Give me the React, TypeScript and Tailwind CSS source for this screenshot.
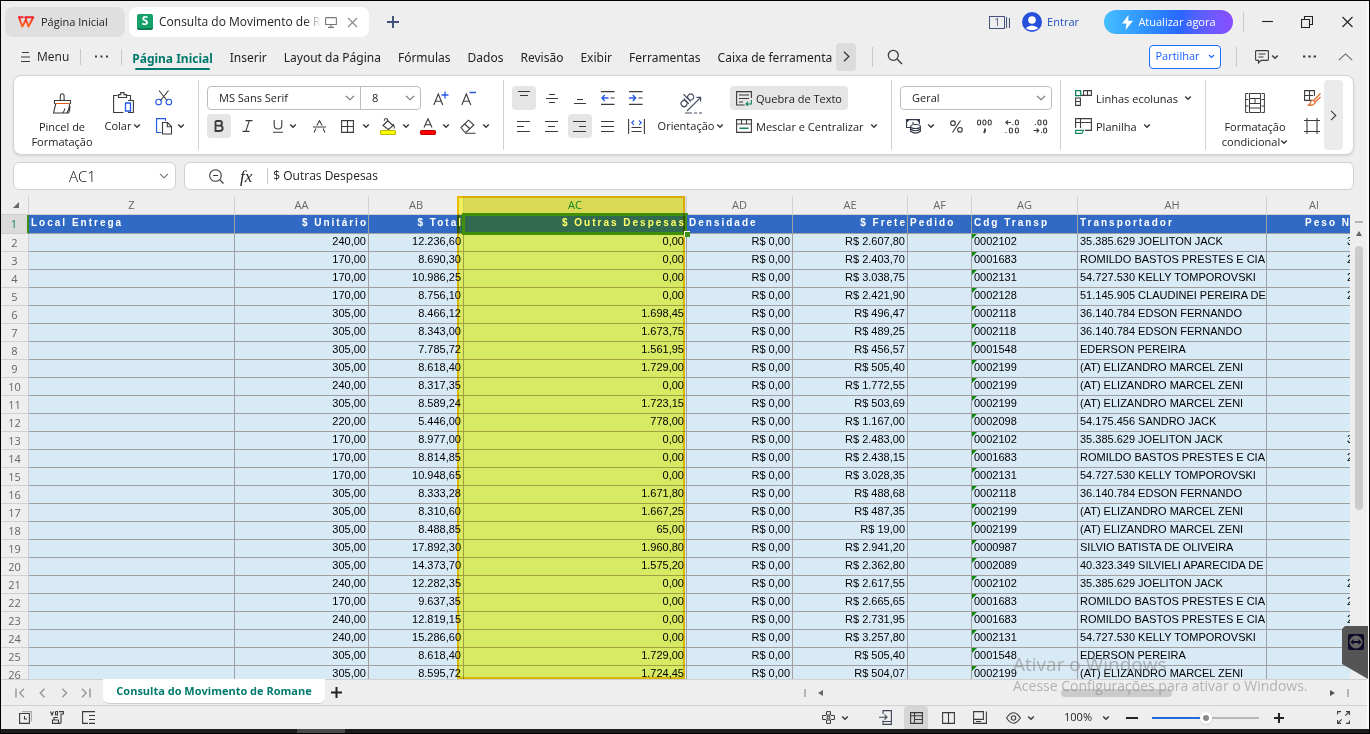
import React from "react";

type Kids = { children?: React.ReactNode };

function Ic({ w = 20, h = 20, className = "", children }: Kids & { w?: number; h?: number; className?: string }) {
  return (
    <svg width={w} height={h} viewBox={`0 0 ${w} ${h}`} fill="none" stroke="#3b3b3b" strokeWidth="1.1" className={`shrink-0 ${className}`} aria-hidden="true">
      {children}
    </svg>
  );
}

const Chev = () => (
  <Ic w={8} h={6}>
    <path d="M1.2 1.5L4 4.2L6.8 1.5" strokeWidth="1.5" />
  </Ic>
);

const WideChev = ({ className = "" }: { className?: string }) => (
  <Ic w={10} h={6} className={`pointer-events-none ${className}`}>
    <path d="M1 .8L5 4.8L9 .8" stroke="#6b6b6b" />
  </Ic>
);

const Sep = ({ className = "" }: { className?: string }) => <span className={`w-px shrink-0 bg-[#c9c9c9] ${className}`} />;

function Tool({ label, active = false, className = "w-6", children }: Kids & { label: string; active?: boolean; className?: string }) {
  return (
    <button
      type="button"
      aria-label={label}
      className={`flex h-6 shrink-0 items-center justify-center rounded ${active ? "bg-[#e5e5e5]" : ""} ${className}`}
    >
      {children}
    </button>
  );
}

function Group({ className, last = false, children }: Kids & { className: string; last?: boolean }) {
  return (
    <div className={`my-1 flex shrink-0 pt-1.5 ${last ? "" : "border-r border-[#d2d2d2]"} ${className}`}>{children}</div>
  );
}

const LINES = {
  top: "M6 1.5H18M8 5.5H16",
  middle: "M9 4.5H15M6 8.5H18M9 12.5H15",
  bottom: "M9 9.5H15M6 13.5H18",
  left: "M5 3.5H18M5 8.5H12M5 13.5H18",
  center: "M5 3.5H18M8 8.5H15M5 13.5H18",
  right: "M5 3.5H18M11 8.5H18M5 13.5H18",
  justify: "M5 3.5H18M5 8.5H18M5 13.5H18",
};

const Lines = ({ d }: { d: string }) => (
  <Ic w={24} h={17}>
    <path d={d} />
  </Ic>
);

function TitleBar() {
  return (
    <header className="flex h-10 shrink-0 items-center pl-1 text-[11px]">
      <button type="button" className="flex h-[30px] w-[120px] shrink-0 items-center gap-1.5 rounded-lg bg-[#dfdfdf] pl-3">
        <svg width="18" height="12" viewBox="0 0 18 12" aria-hidden="true">
          <defs>
            <linearGradient id="wps" x1="0" y1="0" x2="0" y2="1">
              <stop offset="0" stopColor="#f5222d" />
              <stop offset="1" stopColor="#ff6a1a" />
            </linearGradient>
          </defs>
          <path d="M1 1.3H6.5M2 1.3L5.3 10.7L9 3.5L11.4 10.7L16.3 1.3H8.3L9.2 3.5" fill="none" stroke="url(#wps)" strokeWidth="1.9" strokeLinejoin="round" />
        </svg>
        Página Inicial
      </button>
      <div className="ml-1 flex h-[30px] w-60 shrink-0 items-center rounded-lg bg-white pl-2">
        <span className="flex size-4 shrink-0 items-center justify-center rounded-[2px] border-b-2 border-[#0b7a4c] bg-[#16a06a] text-[12px] leading-none font-bold text-white">S</span>
        <span className="relative ml-1.5 w-[162px] overflow-hidden text-[12px] whitespace-nowrap">
          Consulta do Movimento de Ro
          <span className="absolute inset-y-0 right-0 w-4 bg-linear-to-r from-transparent to-white" />
        </span>
        <button type="button" aria-label="Apresentar" className="ml-1">
          <Ic w={12} h={11}>
            <path d="M.6 1.5Q.6.6 1.5.6H10.5Q11.4.6 11.4 1.5V7.5H.6zM6 7.5V10M3 10.4H9" stroke="#777" />
          </Ic>
        </button>
        <button type="button" aria-label="Fechar guia" className="ml-2.5">
          <Ic w={11} h={11}>
            <path d="M1 1L10 10M10 1L1 10" stroke="#888" />
          </Ic>
        </button>
      </div>
      <button type="button" aria-label="Nova guia" className="ml-[18px]">
        <Ic w={12} h={12}>
          <path d="M6 0V12M0 6H12" stroke="#44527a" strokeWidth="2" />
        </Ic>
      </button>
      <div className="ml-auto flex items-center pr-3.5">
        <button type="button" aria-label="Janelas" className="flex items-center gap-px text-[#44527a]">
          <span className="flex h-[13px] w-4 items-center justify-center border border-[#44527a] text-[10px] leading-none">1</span>
          <Ic w={4} h={13}>
            <path d="M.5 1V12M3.5 2V12" stroke="#44527a" />
          </Ic>
        </button>
        <button type="button" className="ml-3 flex items-center gap-[5px] text-[#1f4fc0]">
          <svg width="20" height="20" viewBox="0 0 20 20" aria-hidden="true">
            <circle cx="10" cy="10" r="10" fill="#2450dc" />
            <circle cx="10" cy="8" r="3.8" fill="#fff" />
            <path d="M3.6 16.2Q10 10.6 16.4 16.2Q10 20.5 3.6 16.2" fill="#fff" />
          </svg>
          Entrar
        </button>
        <button type="button" className="ml-[25px] flex h-6 w-[129px] items-center justify-center gap-1 rounded-full bg-linear-to-r from-[#45bfff] via-[#2a66ff] via-60% to-[#8a4dff] text-white">
          <svg width="13" height="15" viewBox="0 0 13 15" aria-hidden="true">
            <path d="M7.5 0L1 8.6H5.4L4.6 15L12 5.8H7.2z" fill="#fff" />
          </svg>
          Atualizar agora
        </button>
        <Sep className="ml-[10px] h-5" />
        <button type="button" aria-label="Minimizar" className="ml-[18px]">
          <Ic w={11} h={12}>
            <path d="M0 5.5H11" stroke="#222" />
          </Ic>
        </button>
        <button type="button" aria-label="Restaurar" className="ml-[28px]">
          <Ic w={12} h={12}>
            <path d="M.5 3.5H8.5V11.5H.5zM3.5 3.5V.5H11.5V8.5H8.5" stroke="#222" />
          </Ic>
        </button>
        <button type="button" aria-label="Fechar" className="ml-[29px]">
          <Ic w={11} h={12}>
            <path d="M.5 1L10.5 11M10.5 1L.5 11" stroke="#222" />
          </Ic>
        </button>
      </div>
    </header>
  );
}

const TABS = ["Inserir", "Layout da Página", "Fórmulas", "Dados", "Revisão", "Exibir", "Ferramentas", "Caixa de ferramenta"];

function MenuBar() {
  return (
    <nav className="flex h-[33px] shrink-0 items-center pb-1 text-[12px]">
      <button type="button" className="ml-5 flex items-center gap-[7px]">
        <Ic w={9} h={12}>
          <path d="M1 1.5H8M0 6H9M0 10.5H9" />
        </Ic>
        Menu
      </button>
      <Sep className="ml-[11px] h-4" />
      <button type="button" aria-label="Mais" className="ml-[14px]">
        <Ic w={13} h={3}>
          <path d="M0 1.5H2M5.5 1.5H7.5M11 1.5H13" strokeWidth="2" />
        </Ic>
      </button>
      <Sep className="ml-[13px] h-4" />
      <div className="ml-[10px] flex items-center gap-[17px] font-['Noto_Sans',sans-serif] whitespace-nowrap">
        <button type="button" className="-mb-1 flex flex-col items-center pt-0.5 font-bold text-[#007a6c]">
          Página Inicial
          <span className="h-0.5 w-[75px] rounded bg-[#007a6c]" />
        </button>
        {TABS.map((t) => (
          <button key={t} type="button" className="pt-0.5">
            {t}
          </button>
        ))}
      </div>
      <button type="button" aria-label="Mais guias" className="ml-1 flex h-7 w-5 shrink-0 items-center justify-center rounded bg-[#dcdcdc]">
        <Ic w={7} h={11}>
          <path d="M1 .8L5.8 5.5L1 10.2" strokeWidth="1.4" />
        </Ic>
      </button>
      <Sep className="ml-4 h-5" />
      <button type="button" aria-label="Pesquisar" className="ml-[14px]">
        <Ic w={16} h={16}>
          <circle cx="6.3" cy="6.3" r="5" strokeWidth="1.3" />
          <path d="M10 10L15 15" strokeWidth="1.4" />
        </Ic>
      </button>
      <div className="ml-auto flex items-center pr-3.5">
        <button type="button" className="flex h-6 w-[72px] items-center justify-center gap-2 rounded border border-[#1a6dff] bg-white text-[11px] text-[#1a5fff]">
          Partilhar
          <svg width="7" height="5" viewBox="0 0 7 5" fill="none" stroke="#1a5fff" strokeWidth="1.1" aria-hidden="true">
            <path d="M1 1L3.5 3.5L6 1" />
          </svg>
        </button>
        <Sep className="ml-[15px] h-5" />
        <button type="button" aria-label="Comentários" className="ml-[18px] flex items-center gap-0.5">
          <Ic w={14} h={14}>
            <path d="M1.5.6H12.5Q13.4.6 13.4 1.5V9.5Q13.4 10.4 12.5 10.4H6L3.5 13V10.4H1.5Q.6 10.4.6 9.5V1.5Q.6.6 1.5.6zM3.5 4H10.5M3.5 7H8.5" />
          </Ic>
          <Chev />
        </button>
        <button type="button" aria-label="Mais opções" className="ml-[24px]">
          <Ic w={13} h={3}>
            <path d="M0 1.5H2.4M5.3 1.5H7.7M10.6 1.5H13" strokeWidth="2.2" />
          </Ic>
        </button>
        <button type="button" aria-label="Recolher faixa" className="ml-[22px]">
          <Ic w={15} h={8}>
            <path d="M.8 7.2L7.5.9L14.2 7.2" stroke="#666" />
          </Ic>
        </button>
      </div>
    </nav>
  );
}

function Picker({ label, options, className }: { label: string; options: string[]; className: string }) {
  return (
    <div className={`relative flex h-6 items-center ${className}`}>
      <select aria-label={label} className="size-full appearance-none bg-transparent pr-5 pl-[11px] text-[11px] leading-4 outline-none">
        {options.map((o) => (
          <option key={o}>{o}</option>
        ))}
      </select>
      <WideChev className="absolute right-[5px]" />
    </div>
  );
}

function Ribbon() {
  return (
    <div className="mr-[13px] ml-3 flex h-20 shrink-0 overflow-hidden rounded-lg border border-[#d4d4d4] bg-white pr-2.5 text-[11px] leading-[15px] shadow-sm">
      <div className="flex min-w-0 flex-1 overflow-hidden">
        <Group className="w-[185px] pl-4">
          <button type="button" className="flex w-16 flex-col items-center pt-1.5">
            <Ic w={20} h={22}>
              <path d="M8.3 8.5V3.7A1.9 1.9 0 0 1 12.1 3.7V8.5M2.5 12V8.5H18.5V12M3.8 11.5L1.5 21H14.5Q17.6 17.5 17.5 11.5M10.5 21Q12.5 19.5 12.8 16.5M14 21H16.6Q18 18 18 14" />
              <path d="M3.5 11.5H17.5" stroke="#e05a14" />
            </Ic>
            <span className="mt-[5px]">Pincel de</span>
            <span>Formatação</span>
          </button>
          <button type="button" className="ml-2.5 flex w-[38px] flex-col items-center pt-1.5">
            <Ic w={21} h={22}>
              <path d="M4.5 3.5H.6V20.5H10.5M14 3.5H17.5V8M5.5 5.5V2.6H7.7V.6H11V2.6H13.5V5.5zM15 8.5H20.4V20.5H15" />
              <path d="M12.5 11H17.5V19H12.5z" stroke="#2458e6" strokeWidth="1.3" />
            </Ic>
            <span className="mt-1 flex items-center gap-0.5">
              Colar <Chev />
            </span>
          </button>
          <div className="ml-2.5 flex flex-col gap-1">
            <Tool label="Cortar">
              <Ic w={18} h={16}>
                <path d="M4 .5L12.3 11M13.5 .5L5.2 11" />
                <circle cx="3.6" cy="12" r="2.8" stroke="#2458e6" />
                <circle cx="13.9" cy="12" r="2.8" stroke="#2458e6" />
              </Ic>
            </Tool>
            <Tool label="Copiar" className="w-9 gap-1">
              <Ic w={17} h={17}>
                <path d="M5.5 14.5H.6V.6H9.5V3" stroke="#2458e6" />
                <path d="M6.5 4.5H11.5L15.5 8.5V16H6.5zM11.3 4.5V8.8H15.5" />
              </Ic>
              <Chev />
            </Tool>
          </div>
        </Group>

        <Group className="w-[305px] flex-col gap-1 pl-2">
          <div className="flex items-center">
            <div className="flex rounded border border-[#bdbdbd]">
              <Picker label="Fonte" options={["MS Sans Serif"]} className="-my-px w-[152px]" />
              <Picker label="Tamanho" options={["8"]} className="-my-px w-[60px] border-l border-[#bdbdbd]" />
            </div>
            <Tool label="Aumentar fonte" className="ml-2 w-6">
              <Ic w={16} h={15}>
                <path d="M.8 14L5.3 3L9.8 14M2.4 10.3H8.2" />
                <path d="M8.5 4H15.5M12 .5V7.5" stroke="#2458e6" strokeWidth="1.3" />
              </Ic>
            </Tool>
            <Tool label="Diminuir fonte" className="ml-1 w-6">
              <Ic w={16} h={15}>
                <path d="M.8 14L5.3 3L9.8 14M2.4 10.3H8.2" />
                <path d="M8.5 1.5H15" stroke="#2458e6" strokeWidth="1.3" />
              </Ic>
            </Tool>
          </div>
          <div className="flex items-center">
            <Tool label="Negrito" active>
              <Ic w={10} h={12}>
                <path d="M1.5 1H5.5Q8 1 8 3.3Q8 5.6 5.5 5.6H1.5M5.5 5.6Q8.7 5.6 8.7 8.3Q8.7 11 5.5 11H1.5V1" strokeWidth="1.8" />
              </Ic>
            </Tool>
            <Tool label="Itálico" className="ml-1 w-6">
              <Ic w={11} h={12}>
                <path d="M3.5.6H10.5M.5 11.4H7.5M7.3.6L3.8 11.4" />
              </Ic>
            </Tool>
            <Tool label="Sublinhado" className="ml-2.5 w-8 gap-1.5">
              <Ic w={10} h={13}>
                <path d="M1.2 0V5.5Q1.2 9 5 9Q8.8 9 8.8 5.5V0M0 12.2H10" />
              </Ic>
              <Chev />
            </Tool>
            <Tool label="Tachado" className="ml-1.5 w-6">
              <Ic w={13} h={13}>
                <path d="M3.8 5.5L6.5.8L9.2 5.5M0 7H13M2.9 8.5L1 12.5M10.1 8.5L12 12.5" />
              </Ic>
            </Tool>
            <Tool label="Bordas" className="ml-2.5 w-7 gap-2">
              <Ic w={13} h={13}>
                <path d="M.6.6H12.4V12.4H.6zM6.5.6V12.4M.6 6.5H12.4" />
              </Ic>
              <Chev />
            </Tool>
            <Tool label="Cor de preenchimento" className="ml-3 w-7 gap-1.5">
              <Ic w={16} h={17}>
                <path d="M7.5 2.5L13 7.5L8.5 11.5L3 7.5L8 2.5M5 2.5L4 1.5M8 2.5L7 .8H4.5M13 6Q15 9 14 10.5" />
                <rect x=".5" y="12.5" width="15" height="4" rx="1.5" fill="#ffff00" stroke="#b8b800" />
              </Ic>
              <Chev />
            </Tool>
            <Tool label="Cor da fonte" className="ml-3 w-7 gap-1.5">
              <Ic w={16} h={17}>
                <path d="M4 9.5L8 .8L12 9.5M5.3 6.7H10.7" />
                <rect x=".5" y="12.5" width="15" height="4" rx="1.5" fill="#f00" stroke="#b80000" />
              </Ic>
              <Chev />
            </Tool>
            <Tool label="Limpar" className="ml-3 w-7 gap-1.5">
              <Ic w={16} h={15}>
                <path d="M1 8.5L8.5 1.2L13.8 6L6.5 13H4.5zM4.6 5L10.2 10M5 14.2H15.5" />
              </Ic>
              <Chev />
            </Tool>
          </div>
        </Group>

        <Group className="w-[388px] pl-2">
          <div className="grid h-13 grid-cols-5 gap-1">
            <Tool label="Alinhar acima" active><Lines d={LINES.top} /></Tool>
            <Tool label="Alinhar ao meio"><Lines d={LINES.middle} /></Tool>
            <Tool label="Alinhar abaixo"><Lines d={LINES.bottom} /></Tool>
            <Tool label="Diminuir recuo">
              <Ic w={14} h={14}>
                <path d="M0 .6H13.5M9.5 7H13.5M0 13.4H13.5" />
                <path d="M7.5 7H.8M3.8 4L.8 7L3.8 10" stroke="#2458e6" strokeWidth="1.3" />
              </Ic>
            </Tool>
            <Tool label="Aumentar recuo">
              <Ic w={14} h={14}>
                <path d="M0 .6H13.5M9.5 7H13.5M0 13.4H13.5" />
                <path d="M0 7H6.7M3.7 4L6.7 7L3.7 10" stroke="#2458e6" strokeWidth="1.3" />
              </Ic>
            </Tool>
            <Tool label="Alinhar à esquerda"><Lines d={LINES.left} /></Tool>
            <Tool label="Centralizar"><Lines d={LINES.center} /></Tool>
            <Tool label="Alinhar à direita" active><Lines d={LINES.right} /></Tool>
            <Tool label="Justificar"><Lines d={LINES.justify} /></Tool>
            <Tool label="Distribuir">
              <Ic w={17} h={15}>
                <path d="M.6 0V15M16.4 0V15M3.5 8.5H13.5M3.5 12.5H13.5" />
                <path d="M6 1.5L3.8 3.7L6 5.9M11 1.5L13.2 3.7L11 5.9" stroke="#2458e6" strokeWidth="1.2" />
              </Ic>
            </Tool>
          </div>
          <button type="button" className="ml-2 flex w-[70px] flex-col items-center pt-1.5">
            <Ic w={24} h={22}>
              <g transform="translate(6.5 15) rotate(-45)" stroke="#444c60" strokeWidth="1.2">
                <circle cx="1.4" cy="-3.4" r="3" />
                <path d="M4.6 -7V0M7.6 -10.5V0" />
                <circle cx="10.8" cy="-3.4" r="3" />
              </g>
              <path d="M8 19L21.5 5.6M17.5 5.4H21.6V9.5M6 21H13M15 21H18M20 21H23" stroke="#444c60" strokeWidth="1.2" />
            </Ic>
            <span className="mt-1 flex items-center gap-0.5">
              Orientação <Chev />
            </span>
          </button>
          <div className="ml-1 flex flex-col items-start gap-1 whitespace-nowrap">
            <button type="button" className="flex h-6 items-center gap-1 rounded bg-[#e5e5e5] px-1.5">
              <Ic w={16} h={15}>
                <path d="M8.5 14H.6V.6H15.4V7M3 4H13M3 7.5H13M3 11H7" />
                <path d="M15.4 9V13H10M12 11L10 13L12 15" stroke="#11865c" />
              </Ic>
              Quebra de Texto
            </button>
            <button type="button" className="flex h-6 items-center gap-1 rounded px-1.5">
              <Ic w={16} h={14}>
                <path d="M.6.6H15.4V13.4H.6zM.6 5H15.4M5.5.6V5M10.5.6V5" />
                <path d="M3.5 9.2H12.5" stroke="#11865c" strokeWidth="1.4" />
              </Ic>
              Mesclar e Centralizar
              <span className="ml-0.5"><Chev /></span>
            </button>
          </div>
        </Group>

        <Group className="w-[169px] flex-col gap-1 pl-2">
          <Picker label="Formato numérico" options={["Geral"]} className="w-[152px] rounded border border-[#bdbdbd]" />
          <div className="flex items-center">
            <Tool label="Moeda" className="ml-1.5 w-7 gap-1.5">
              <Ic w={15} h={15}>
                <path d="M5 8.5H.6V.6H13.4V5M.6 3L3 .6M11 .6L13.4 3M7 3V5" stroke="#2f3748" />
                <ellipse cx="9.5" cy="7.5" rx="4.9" ry="2" stroke="#2f3748" />
                <path d="M4.6 7.5V12.3Q9.5 16 14.4 12.3V7.5M4.6 10Q9.5 13.5 14.4 10" stroke="#2f3748" />
              </Ic>
              <Chev />
            </Tool>
            <Tool label="Porcentagem" className="ml-2.5 w-6">
              <Ic w={13} h={13}>
                <circle cx="3" cy="3.2" r="2.3" />
                <circle cx="10" cy="9.8" r="2.3" />
                <path d="M10.5.5L2.5 12.5" />
              </Ic>
            </Tool>
            <Tool label="Separador de milhares" className="ml-1 w-6">
              <Ic w={15} h={15}>
                <rect x=".6" y="1" width="3" height="5" rx="1.5" />
                <rect x="5.9" y="1" width="3" height="5" rx="1.5" />
                <rect x="11.2" y="1" width="3" height="5" rx="1.5" />
                <path d="M8 9.5V12L6.8 14" strokeWidth="1.8" />
              </Ic>
            </Tool>
            <Tool label="Aumentar casas decimais" className="ml-1 w-6">
              <Ic w={15} h={15}>
                <path d="M6 3.5H.8M3 1.3L.8 3.5L3 5.7M1 13V14M8 6V5" />
                <rect x="10.4" y="1" width="3" height="5" rx="1.5" />
                <rect x="4.4" y="9" width="3" height="5" rx="1.5" />
                <rect x="10.4" y="9" width="3" height="5" rx="1.5" />
              </Ic>
            </Tool>
            <Tool label="Diminuir casas decimais" className="ml-1 w-6">
              <Ic w={15} h={15}>
                <path d="M.5 11.5H5.8M3.6 9.3L5.8 11.5L3.6 13.7M2.5 6V5M8.5 14V13" />
                <rect x="5" y="1" width="3" height="5" rx="1.5" />
                <rect x="10.6" y="1" width="3" height="5" rx="1.5" />
                <rect x="10.6" y="9" width="3" height="5" rx="1.5" />
              </Ic>
            </Tool>
          </div>
        </Group>

        <Group className="w-[145px] flex-col items-start gap-1 pl-3.5 whitespace-nowrap">
          <button type="button" className="flex h-6 items-center gap-1">
            <Ic w={17} h={16}>
              <path d="M8.5.6H16.4V5.4H8.5M12.5.6V5.4M.6 8V15.4H5.4V8zM.6 11.5H5.4M5.4 5.4H8.5V.6" />
              <path d="M.6.6H5.6V5.6H.6z" stroke="#11865c" strokeWidth="1.3" />
            </Ic>
            Linhas ecolunas
            <span className="ml-0.5"><Chev /></span>
          </button>
          <button type="button" className="flex h-6 items-center gap-1">
            <Ic w={17} h={16}>
              <path d="M.6 10V.6H16.4V12.4H10M.6 4.5H16.4M5.5.6V10" />
              <path d="M.6 12.4H8.4L7 15.4H.6z" stroke="#11865c" />
            </Ic>
            Planilha
            <span className="ml-0.5"><Chev /></span>
          </button>
        </Group>

        <Group className="pl-3" last>
          <button type="button" className="flex w-[74px] flex-col items-center pt-1.5 whitespace-nowrap">
            <Ic w={20} h={22}>
              <path d="M3.5 1.5H.6V20.5H3.5M16.5 1.5H19.4V20.5H16.5M4.5 1.5H15.5V6.5H4.5zM4.5 6.5V20.5H15.5V6.5M4.5 11.5H15.5M4.5 16H15.5M10 6.5V11.5M.6 7.5H3.5M.6 14H3.5M16.5 7.5H19.4M16.5 14H19.4" strokeWidth="1" />
            </Ic>
            <span className="mt-[5px]">Formatação</span>
            <span className="flex items-center">
              condicional
              <Chev />
            </span>
          </button>
          <div className="ml-2 flex flex-col gap-1">
            <Tool label="Estilos">
              <Ic w={17} h={16}>
                <path d="M8 10.4H.6V.6H10.4V6M.6 5.5H9M5.5.6V10.4" />
                <path d="M16.5 3.5L9.5 10.5M9.5 10.5Q11 11 11 13Q9 16 4.5 15Q6.5 14 6.5 12Q7.5 10 9.5 10.5M16.5 7L11 12" stroke="#df6a2c" strokeWidth="1.3" />
              </Ic>
            </Tool>
            <Tool label="Ajustar">
              <Ic w={16} h={16}>
                <path d="M3 0V16M13 0V16M0 2.5H16M0 13.5H16" />
              </Ic>
            </Tool>
          </div>
        </Group>
      </div>
      <button type="button" aria-label="Mais comandos" className="my-1 flex w-[19px] shrink-0 items-center justify-center rounded bg-[#ebebeb]">
        <Ic w={7} h={11}>
          <path d="M1 .8L5.8 5.5L1 10.2" />
        </Ic>
      </button>
    </div>
  );
}

function FormulaBar() {
  return (
    <div className="mt-[7px] mr-[13px] mb-1.5 ml-3 flex h-7 shrink-0 gap-2 text-[12px]">
      <div className="relative flex w-[163px] items-center rounded-md border border-[#d0d0d0] bg-white">
        <input aria-label="Caixa de nome" defaultValue="AC1" className="w-full bg-transparent pr-6 text-center text-[15px] font-light text-black outline-none" />
        <WideChev className="absolute right-1.5" />
      </div>
      <div className="flex min-w-0 flex-1 items-center rounded-md border border-[#d0d0d0] bg-white pl-6">
        <button type="button" aria-label="Reduzir">
          <Ic w={15} h={15}>
            <circle cx="6.5" cy="6.5" r="5.8" />
            <path d="M11 11L14.5 14.5M4 6.5H9" />
          </Ic>
        </button>
        <button type="button" aria-label="Inserir função" className="ml-4 font-['Liberation_Serif',serif] text-[17px] leading-none text-[#222] italic">
          fx
        </button>
        <Sep className="ml-[15px] h-4" />
        <input aria-label="Barra de fórmulas" defaultValue="$ Outras Despesas" className="ml-[5px] min-w-0 flex-1 bg-transparent outline-none" />
      </div>
    </div>
  );
}

const J = "35.385.629 JOELITON JACK";
const R = "ROMILDO BASTOS PRESTES E CIA";
const K = "54.727.530 KELLY TOMPOROVSKI";
const F = "36.140.784 EDSON FERNANDO";
const Z = "(AT) ELIZANDRO MARCEL ZENI";

const ROWS: string[][] = [
  ["240,00", "12.236,60", "0,00", "2.607,80", "0002102", J, "3"],
  ["170,00", "8.690,30", "0,00", "2.403,70", "0001683", R, "2"],
  ["170,00", "10.986,25", "0,00", "3.038,75", "0002131", K, "2"],
  ["170,00", "8.756,10", "0,00", "2.421,90", "0002128", "51.145.905 CLAUDINEI PEREIRA DE", "2"],
  ["305,00", "8.466,12", "1.698,45", "496,47", "0002118", F, ""],
  ["305,00", "8.343,00", "1.673,75", "489,25", "0002118", F, ""],
  ["305,00", "7.785,72", "1.561,95", "456,57", "0001548", "EDERSON PEREIRA", ""],
  ["305,00", "8.618,40", "1.729,00", "505,40", "0002199", Z, ""],
  ["240,00", "8.317,35", "0,00", "1.772,55", "0002199", Z, ""],
  ["305,00", "8.589,24", "1.723,15", "503,69", "0002199", Z, ""],
  ["220,00", "5.446,00", "778,00", "1.167,00", "0002098", "54.175.456 SANDRO JACK", ""],
  ["170,00", "8.977,00", "0,00", "2.483,00", "0002102", J, "3"],
  ["170,00", "8.814,85", "0,00", "2.438,15", "0001683", R, "2"],
  ["170,00", "10.948,65", "0,00", "3.028,35", "0002131", K, ""],
  ["305,00", "8.333,28", "1.671,80", "488,68", "0002118", F, ""],
  ["305,00", "8.310,60", "1.667,25", "487,35", "0002199", Z, ""],
  ["305,00", "8.488,85", "65,00", "19,00", "0002199", Z, ""],
  ["305,00", "17.892,30", "1.960,80", "2.941,20", "0000987", "SILVIO BATISTA DE OLIVEIRA", ""],
  ["305,00", "14.373,70", "1.575,20", "2.362,80", "0002089", "40.323.349 SILVIELI APARECIDA DE", ""],
  ["240,00", "12.282,35", "0,00", "2.617,55", "0002102", J, "2"],
  ["170,00", "9.637,35", "0,00", "2.665,65", "0001683", R, "2"],
  ["240,00", "12.819,15", "0,00", "2.731,95", "0001683", R, "2"],
  ["240,00", "15.286,60", "0,00", "3.257,80", "0002131", K, ""],
  ["305,00", "8.618,40", "1.729,00", "505,40", "0001548", "EDERSON PEREIRA", ""],
  ["305,00", "8.595,72", "1.724,45", "504,07", "0002199", Z, ""],
];

const COLS = [
  { id: "Z", head: "Local Entrega", w: "w-[206px]", right: false },
  { id: "AA", head: "$ Unitário", w: "w-[134px]", right: true },
  { id: "AB", head: "$ Total", w: "w-[95px]", right: true },
  { id: "AC", head: "$ Outras Despesas", w: "w-[223px]", right: true },
  { id: "AD", head: "Densidade", w: "w-[106px]", right: false },
  { id: "AE", head: "$ Frete", w: "w-[115px]", right: true },
  { id: "AF", head: "Pedido", w: "w-[64px]", right: false },
  { id: "AG", head: "Cdg Transp", w: "w-[106px]", right: false },
  { id: "AH", head: "Transportador", w: "w-[189px]", right: false },
  { id: "AI", head: "Peso N", w: "w-[95px]", right: true },
];

function Sheet() {
  const cell = "h-[18px] overflow-hidden border-r border-b border-[#a0a0a0] bg-[#d8eaf6] px-0.5 py-0 align-top leading-[15px] whitespace-nowrap";
  return (
    <main className="flex min-h-0 flex-1">
      <div className="relative min-w-0 flex-1 overflow-hidden">
        <table className="w-[1361px] table-fixed border-separate border-spacing-0 font-['Liberation_Sans',Arial,sans-serif] text-[11px] text-black">
          <thead className="font-['Open_Sans',sans-serif] text-[#666]">
            <tr>
              <th className="h-[19px] w-7 border-r border-b border-[#d0d0d0] p-0">
                <svg width="6" height="6" viewBox="0 0 6 6" className="ml-3" aria-hidden="true">
                  <path d="M6 0V6H0z" fill="#666" />
                </svg>
              </th>
              {COLS.map((c) => (
                <th
                  key={c.id}
                  scope="col"
                  className={`h-[19px] border-r border-b border-[#d0d0d0] p-0 font-normal ${c.w} ${c.id === "AC" ? "bg-[#dadada] text-[#11865c]" : ""}`}
                >
                  {c.id}
                </th>
              ))}
            </tr>
          </thead>
          <tbody>
            <tr>
              <th scope="row" className="h-[19px] border-r-2 border-b border-r-[#3a8f14] border-b-[#d0d0d0] bg-[#dadada] p-0 font-['Open_Sans',sans-serif] font-normal text-[#11865c]">
                1
              </th>
              {COLS.map((c) => (
                <td
                  key={c.id}
                  className={`relative h-[19px] border-r border-b border-[#a0a0a0] bg-[#316ac5] py-0 pl-0.5 align-top text-[10px] leading-[15px] font-bold tracking-[2px] whitespace-nowrap text-white ${c.right ? "text-right" : ""} ${c.id === "AI" ? "pr-2.5" : "pr-0"}`}
                >
                  {c.head}
                  {c.id === "AC" && (
                    <span className="pointer-events-none absolute -inset-x-0.5 -top-0.5 -bottom-0.5 border-[3px] border-[#3f8f14]">
                      <span className="absolute -right-[5px] -bottom-[5px] z-10 size-1.5 border-t border-l border-white bg-[#3f8f14]" />
                    </span>
                  )}
                </td>
              ))}
            </tr>
            {ROWS.map(([aa, ab, ac, ae, ag, ah, ai], i) => (
              <tr key={i}>
                <th scope="row" className="h-[18px] border-r border-b border-[#d0d0d0] p-0 font-['Open_Sans',sans-serif] leading-4 font-normal text-[#666]">
                  {i + 2}
                </th>
                <td className={cell} />
                <td className={`${cell} text-right`}>{aa}</td>
                <td className={`${cell} text-right`}>{ab}</td>
                <td className={`${cell} text-right`}>{ac}</td>
                <td className={`${cell} text-right`}>R$ 0,00</td>
                <td className={`${cell} text-right`}>R$ {ae}</td>
                <td className={cell} />
                <td className={`${cell} relative`}>
                  <svg width="5" height="5" viewBox="0 0 5 5" className="absolute top-0 left-0" aria-hidden="true">
                    <path d="M0 0H5L0 5z" fill="#0a8a0a" />
                  </svg>
                  {ag}
                </td>
                <td className={cell}>{ah}</td>
                <td className={`${cell} text-right`}>
                  <span className="pr-1.5">{ai}</span>
                </td>
              </tr>
            ))}
          </tbody>
        </table>
        <div className="pointer-events-none absolute inset-y-0 left-[456px] w-[228px] border-2 border-[#ffc800] bg-[#ffff66] mix-blend-multiply" />
      </div>
      <div className="flex w-[17px] shrink-0 flex-col items-center pt-[25px]">
        <span className="h-0.5 w-2 bg-[#b5b5b5]" />
        <svg width="6" height="5" viewBox="0 0 6 5" className="mt-2" aria-hidden="true">
          <path d="M3 0L6 5H0z" fill="#666" />
        </svg>
        <span className="mt-2.5 h-[264px] w-2 rounded-full bg-[#cbcbcb]" />
      </div>
    </main>
  );
}

const NAV = [
  { label: "Primeira planilha", d: "M1 .5V9.5M9 .8L4.8 5L9 9.2" },
  { label: "Planilha anterior", d: "M7.5.8L3.3 5L7.5 9.2" },
  { label: "Próxima planilha", d: "M3.3.8L7.5 5L3.3 9.2" },
  { label: "Última planilha", d: "M1 .8L5.2 5L1 9.2M9 .5V9.5" },
];

function SheetTabs() {
  return (
    <div className="flex h-[27px] shrink-0 border-t border-b border-[#d0d0d0]">
      <div className="flex w-[102px] items-center gap-3 pl-3.5">
        {NAV.map((n) => (
          <button key={n.label} type="button" aria-label={n.label}>
            <Ic w={10} h={10}>
              <path d={n.d} stroke="#9a9a9a" strokeWidth="1.5" />
            </Ic>
          </button>
        ))}
      </div>
      <button type="button" className="-mt-px h-[25px] w-[222px] rounded-b-md border-b border-[#d0d0d0] bg-white pt-px text-[11px] font-bold text-[#007a6c]">
        Consulta do Movimento de Romane
      </button>
      <button type="button" aria-label="Nova planilha" className="ml-1.5">
        <Ic w={11} h={11}>
          <path d="M5.5 0V11M0 5.5H11" strokeWidth="2" stroke="#222" />
        </Ic>
      </button>
      <div className="mr-[18px] ml-auto flex w-[545px] items-center">
        <span className="h-2 w-0.5 bg-[#b5b5b5]" />
        <svg width="5" height="6" viewBox="0 0 5 6" className="ml-3" aria-hidden="true">
          <path d="M5 0V6L0 3z" fill="#666" />
        </svg>
        <span className="ml-[238px] h-2 w-[111px] rounded-full bg-[#cbcbcb]" />
        <svg width="5" height="6" viewBox="0 0 5 6" className="ml-auto" aria-hidden="true">
          <path d="M0 0V6L5 3z" fill="#555" />
        </svg>
        <span className="ml-3 h-2 w-0.5 bg-[#b5b5b5]" />
      </div>
    </div>
  );
}

function StatusBar() {
  return (
    <footer className="flex h-[23px] shrink-0 items-center text-[11px]">
      <Tool label="Histórico" className="ml-3 w-6">
        <Ic w={13} h={13}>
          <path d="M.6 2.5H10.4V12.4H.6zM5.5 5V8H8" />
          <path d="M3 .6H12.4V10.5" stroke="#aaa" />
        </Ic>
      </Tool>
      <Tool label="Macro" className="ml-2 w-6">
        <Ic w={14} h={13}>
          <path d="M.5.5L2 4L3.5.5M5.5.5V4H7.5V.5H5.5M9 .6H13.4V3H11V11.5Q11 12.4 10 12.4H2.5V9H8.5V11Q8.5 12.4 10 12.4M4 9V6.5H8" />
        </Ic>
      </Tool>
      <Tool label="Estrutura" className="ml-2 w-6">
        <Ic w={14} h={13}>
          <path d="M6 .6H.6V12.4H6M4.5 .6H13M7 4.5H13M7 8.5H13M7 12.4H13" />
        </Ic>
      </Tool>
      <div className="ml-auto flex items-center pr-[17px]">
        <Tool label="Leitura" className="w-7 gap-1.5">
          <Ic w={13} h={13}>
            <path d="M4.5.6H8.5V4H4.5zM4.5 9H8.5V12.4H4.5zM5.2 5.2H7.8V7.8H5.2zM4 4.5H.6V8.5H4M9 4.5H12.4V8.5H9" strokeWidth="1" />
          </Ic>
          <Chev />
        </Tool>
        <Tool label="Celular" className="ml-[25px] w-6">
          <Ic w={14} h={15}>
            <path d="M4 4V.6H12.4V14.4H4V10.5M4 11.5H12.4M0 7.2H8M5.5 4.7L8 7.2L5.5 9.7" stroke="#3e4658" />
          </Ic>
        </Tool>
        <Tool label="Normal" className="ml-1.5 w-6 bg-[#d5d5d5]">
          <Ic w={13} h={12}>
            <path d="M.6.6H12.4V11.4H.6zM.6 3.8H12.4M4.5.6V11.4M4.5 7.5H12.4" />
          </Ic>
        </Tool>
        <Tool label="Quebra de página" className="ml-2 w-6">
          <Ic w={13} h={12}>
            <path d="M.6.6H12.4V11.4H.6zM6.5.6V11.4" />
          </Ic>
        </Tool>
        <Tool label="Layout" className="ml-2 w-6">
          <Ic w={14} h={13}>
            <path d="M.6.6H10.4V8.4H.6zM.6 8V12.4H13.4V.5M3 10.5H8" />
          </Ic>
        </Tool>
        <Tool label="Proteção ocular" className="ml-3 w-8 gap-1.5">
          <Ic w={15} h={12}>
            <path d="M.6 6Q7.5-4.4 14.4 6Q7.5 16.4.6 6z" />
            <circle cx="7.5" cy="6" r="2.2" />
          </Ic>
          <Chev />
        </Tool>
        <button type="button" className="ml-7 flex items-center gap-2.5">
          100%
          <Chev />
        </button>
        <Tool label="Reduzir zoom" className="ml-2.5 w-6">
          <Ic w={12} h={10}>
            <path d="M0 5H12" strokeWidth="2" stroke="#222" />
          </Ic>
        </Tool>
        <input
          type="range"
          aria-label="Zoom"
          min="0"
          max="100"
          defaultValue="50"
          className="ml-2 h-3 w-[107px] appearance-none bg-[linear-gradient(to_right,#2468e0_50%,#b8b8b8_50%)] bg-[length:100%_2px] bg-center bg-no-repeat [&::-webkit-slider-thumb]:size-3 [&::-webkit-slider-thumb]:appearance-none [&::-webkit-slider-thumb]:rounded-full [&::-webkit-slider-thumb]:border-[3px] [&::-webkit-slider-thumb]:border-white [&::-webkit-slider-thumb]:bg-[#888] [&::-webkit-slider-thumb]:shadow"
        />
        <Tool label="Ampliar zoom" className="ml-2 w-6">
          <Ic w={10} h={10}>
            <path d="M5 0V10M0 5H10" strokeWidth="2" stroke="#222" />
          </Ic>
        </Tool>
        <button type="button" aria-label="Tela cheia" className="ml-[46px]">
          <Ic w={13} h={13}>
            <path d="M9 .6H12.4V4M12.4.6L8.3 4.7M4 12.4H.6V9M.6 12.4L4.7 8.3M.6 3.5V.6H4M12.4 9.5V12.4H9" />
          </Ic>
        </button>
      </div>
    </footer>
  );
}

export default function App() {
  return (
    <div className="relative flex h-screen flex-col overflow-hidden bg-black p-px font-['Open_Sans',sans-serif] text-[#222]">
      <div className="flex min-h-0 flex-1 flex-col border-r-2 border-[#f8f8f8] bg-[#eeeeee] pt-px">
        <TitleBar />
        <MenuBar />
        <Ribbon />
        <FormulaBar />
        <Sheet />
        <SheetTabs />
        <StatusBar />
      </div>
      <div className="h-1 shrink-0 bg-[#1c1c1c] pl-[296px]">
        <span className="block h-full w-12 bg-[#4a4a4a]" />
      </div>
      <div className="pointer-events-none absolute right-[57px] bottom-[38px] w-[300px] whitespace-nowrap text-[#8a8a8a]/60">
        <p className="text-[19px] leading-6">Ativar o Windows</p>
        <p className="text-[14px] leading-5">Acesse Configurações para ativar o Windows.</p>
      </div>
      <svg width="26" height="53" viewBox="0 0 26 53" className="absolute right-[2px] bottom-[55px]" aria-hidden="true">
        <path d="M3 0H26V53L0 38V3z" fill="#555" />
        <rect x="6" y="8" width="16" height="16" rx="2" fill="#0b0b28" />
        <circle cx="14" cy="16" r="6.5" fill="#666" />
        <path d="M8.5 16L11.5 13V15H16.5V13L19.5 16L16.5 19V17H11.5V19z" fill="#0b0b28" />
      </svg>
    </div>
  );
}
